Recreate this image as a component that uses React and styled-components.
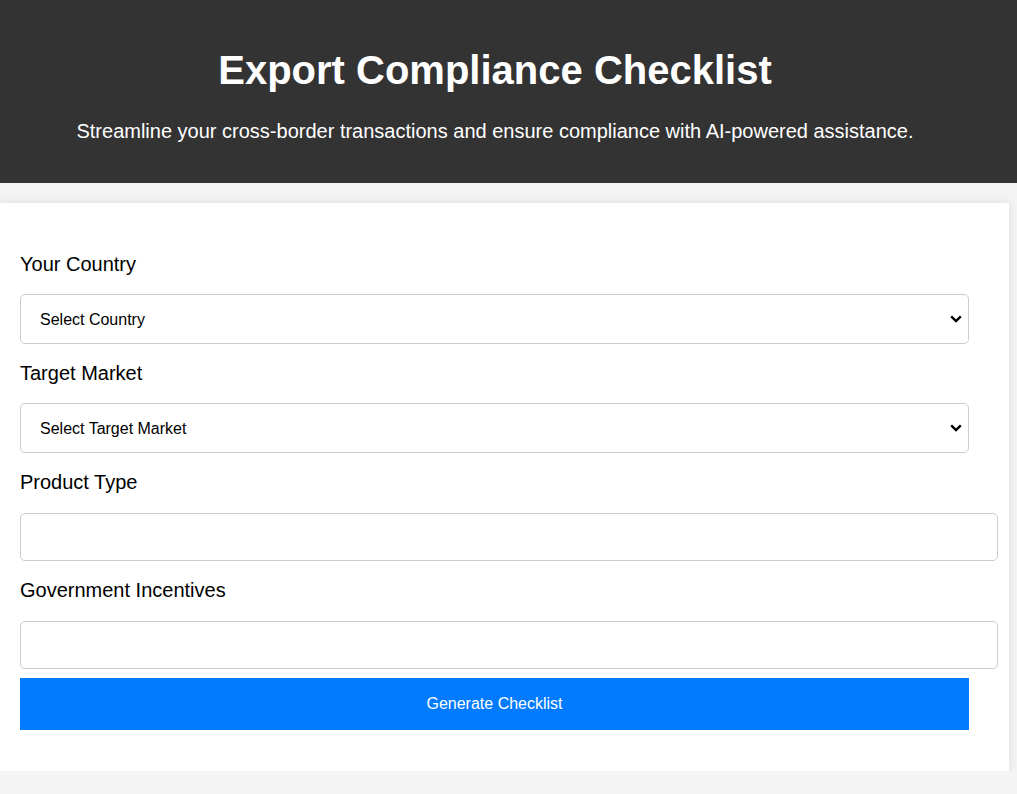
import React from "react"
import styled, { createGlobalStyle } from "styled-components"

const GlobalStyle = createGlobalStyle`
  * {
    box-sizing: border-box;
  }

  body {
    margin: 0;
    background-color: #f4f4f4;
    font-family: "Liberation Sans", Arial, sans-serif;
    color: #000;
  }
`

// chevron drawn for the select arrow
const chevron =
  "data:image/svg+xml;utf8," +
  encodeURIComponent(
    '<svg xmlns="http://www.w3.org/2000/svg" width="12" height="8" viewBox="0 0 12 8"><path d="M1.2 1.3 L6 6 L10.8 1.3" fill="none" stroke="#000" stroke-width="2.4"/></svg>'
  )

const countries = ["Select Country"]
const markets = ["Select Target Market"]

const App = () => (
  <>
    <GlobalStyle />
    <Header>
      <Title>Export Compliance Checklist</Title>
      <Tagline>
        Streamline your cross-border transactions and ensure compliance with AI-powered assistance.
      </Tagline>
    </Header>

    <Card>
      <Form onSubmit={e => e.preventDefault()}>
        <Label htmlFor="country">Your Country</Label>
        <Select id="country" defaultValue="">
          {countries.map(c => <option key={c} value="">{c}</option>)}
        </Select>

        <Label htmlFor="market">Target Market</Label>
        <Select id="market" defaultValue="">
          {markets.map(m => <option key={m} value="">{m}</option>)}
        </Select>

        <Label htmlFor="product">Product Type</Label>
        <Input id="product" type="text" />

        <Label htmlFor="incentives">Government Incentives</Label>
        <Input id="incentives" type="text" $last />

        <Button type="submit">Generate Checklist</Button>
      </Form>
    </Card>
  </>
)

const Header = styled.header`
  background-color: #333;
  color: #fff;
  height: 183px;
  padding: 47px 27px 0 0;
  text-align: center;
`

const Title = styled.h1`
  margin: 0;
  font-size: 40px;
  line-height: 46px;
  font-weight: bold;
`

const Tagline = styled.p`
  margin: 27px 0 0;
  font-size: 20px;
  line-height: 23px;
`

const Card = styled.main`
  width: 1009px;
  margin-top: 20px;
  background-color: #fff;
  padding: 50px 20px 41px;
  box-shadow: 0 0 10px rgba(0, 0, 0, 0.1);
`

const Form = styled.form`
  display: flex;
  flex-direction: column;
  align-items: flex-start;
`

const Label = styled.label`
  display: block;
  font-size: 20px;
  line-height: 23px;
  margin-bottom: 18px;
`

const Select = styled.select`
  appearance: none;
  width: 949px;
  height: 50px;
  padding: 0 30px 0 19px;
  margin-bottom: 18px;
  font-family: inherit;
  font-size: 16px;
  color: #000;
  background: #fff url("${chevron}") no-repeat right 6px center;
  border: 1px solid #ccc;
  border-radius: 5px;
`

const Input = styled.input`
  width: 978px;
  height: 48px;
  padding: 0 10px;
  margin-top: 1px;
  margin-bottom: ${p => (p.$last ? "9px" : "18px")};
  font-family: inherit;
  font-size: 16px;
  border: 1px solid #ccc;
  border-radius: 5px;
`

const Button = styled.button`
  width: 949px;
  height: 52px;
  border: none;
  background-color: #007bff;
  color: #fff;
  font-family: inherit;
  font-size: 16px;
  cursor: pointer;
`

export default App
